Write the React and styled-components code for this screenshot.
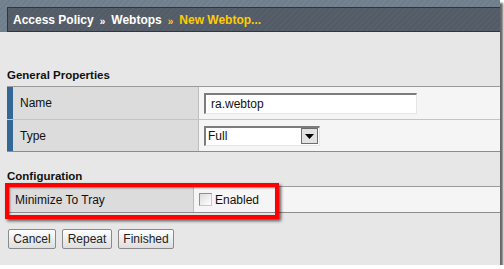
import React from 'react';
import styled, { createGlobalStyle } from 'styled-components';

const GlobalStyle = createGlobalStyle`
  html, body {
    margin: 0;
    padding: 0;
    background: #ffffff;
  }
  body {
    font-family: "Liberation Sans", Arial, sans-serif;
    font-size: 12px;
    color: #111;
  }
`;

const Frame = styled.div`
  position: relative;
  width: 500px;
  height: 265px;
  background: #e7e7e7;
  box-shadow: 3px 3px 2px rgba(0, 0, 0, 0.6);
  overflow: hidden;
`;

const TopStrip = styled.div`
  padding: 7px 0 0 7px;
  background: repeating-linear-gradient(-45deg, #6f7e8d 0 2px, #74838f 2px 4px);
`;

const Header = styled.div`
  height: 23px;
  display: flex;
  align-items: center;
  padding-left: 5px;
  border: 1px solid #30363c;
  border-right: none;
  background: repeating-linear-gradient(-45deg, #535c66 0 2px, #57606a 2px 4px);
  font-weight: bold;
  font-size: 12px;
  color: #ffffff;
`;

const Crumb = styled.span`
  color: ${(p) => (p.$current ? '#ffcc00' : '#ffffff')};
`;

const Sep = styled.span`
  font-size: 10px;
  margin: 3px 6px 0 6px;
  color: ${(p) => (p.$current ? '#ffcc00' : '#ffffff')};
`;

const SectionTitle = styled.div`
  margin-top: ${(p) => p.$top}px;
  padding: 0 0 ${(p) => p.$bottom}px 7px;
  line-height: 14px;
  font-weight: bold;
  font-size: 11.5px;
  color: #111;
`;

const Table = styled.div`
  margin-left: 7px;
  border-top: 1px solid #9a9a9a;
  border-bottom: 1px solid #8c8c8c;
`;

const Row = styled.div`
  display: grid;
  grid-template-columns: ${(p) => p.$label}px 1fr;
  height: ${(p) => p.$h}px;
  & + & {
    border-top: 1px solid #c4c4c4;
  }
`;

const LabelCell = styled.div`
  display: flex;
  align-items: center;
  background: #dcdcdc;
  border-left: ${(p) => (p.$bar ? '6px solid #336797' : 'none')};
  padding-left: ${(p) => (p.$bar ? 7 : 8)}px;
  font-size: 12px;
  color: #111;
`;

const ValueCell = styled.div`
  display: flex;
  align-items: center;
  gap: 3px;
  background: #f5f5f5;
  border-left: 1px solid #bdbdbd;
  padding-left: 5px;
`;

const TextInput = styled.div`
  box-sizing: border-box;
  width: 213px;
  height: 21px;
  display: flex;
  align-items: center;
  padding-left: 5px;
  background: #fff;
  border-top: 2px solid #7c7c7c;
  border-left: 2px solid #7c7c7c;
  border-right: 1px solid #e6e6e6;
  border-bottom: 1px solid #e6e6e6;
  font-size: 12px;
  color: #111;
`;

const Select = styled.div`
  box-sizing: border-box;
  width: 116px;
  height: 20px;
  display: flex;
  align-items: center;
  justify-content: space-between;
  padding: 0 1px 0 2px;
  background: #fff;
  border-top: 2px solid #7c7c7c;
  border-left: 2px solid #7c7c7c;
  border-right: 1px solid #e6e6e6;
  border-bottom: 1px solid #e6e6e6;
  font-size: 12px;
  color: #111;
`;

const DropButton = styled.div`
  box-sizing: border-box;
  width: 17px;
  height: 16px;
  display: flex;
  align-items: center;
  justify-content: center;
  background: #e2e2e2;
  border: 1px solid #6d6d6d;
`;

const Checkbox = styled.div`
  box-sizing: border-box;
  width: 13px;
  height: 13px;
  background: linear-gradient(135deg, #dcdcdc, #ffffff);
  border: 1px solid #8e8e8e;
  border-right-color: #c8c8c8;
  border-bottom-color: #c8c8c8;
`;

const CheckLabel = styled.span`
  font-size: 12px;
  color: #111;
`;

const Buttons = styled.div`
  display: flex;
  gap: 6px;
  margin: 16px 0 0 8px;
`;

const Button = styled.button`
  box-sizing: border-box;
  width: ${(p) => p.$w}px;
  height: 20px;
  padding: 0;
  border: 1px solid #8a8a8a;
  border-radius: 2px;
  background: linear-gradient(#fdfdfd, #dedede);
  font-family: "Liberation Sans", Arial, sans-serif;
  font-size: 12px;
  color: #222;
`;

const Highlight = styled.div`
  position: absolute;
  left: 5px;
  top: 183px;
  width: 274px;
  height: 36px;
  box-sizing: border-box;
  border: 4px solid #ff0000;
  box-shadow: 2px 2px 3px rgba(0, 0, 0, 0.65), inset 1px 1px 2px rgba(0, 0, 0, 0.5);
  pointer-events: none;
`;

const Arrow = () => (
  <svg width="9" height="5" viewBox="0 0 9 5">
    <path d="M0 0h9L4.5 5z" fill="#000" />
  </svg>
);

export default function App() {
  return (
    <>
      <GlobalStyle />
      <Frame>
        <TopStrip>
          <Header>
            <Crumb>Access Policy</Crumb>
            <Sep>»</Sep>
            <Crumb>Webtops</Crumb>
            <Sep $current>»</Sep>
            <Crumb $current>New Webtop...</Crumb>
          </Header>
        </TopStrip>

        <SectionTitle $top={36} $bottom={4}>General Properties</SectionTitle>
        <Table>
          <Row $label={191} $h={32}>
            <LabelCell $bar>Name</LabelCell>
            <ValueCell>
              <TextInput>ra.webtop</TextInput>
            </ValueCell>
          </Row>
          <Row $label={191} $h={31}>
            <LabelCell $bar>Type</LabelCell>
            <ValueCell>
              <Select>
                <span>Full</span>
                <DropButton>
                  <Arrow />
                </DropButton>
              </Select>
            </ValueCell>
          </Row>
        </Table>

        <SectionTitle $top={17} $bottom={3}>Configuration</SectionTitle>
        <Table>
          <Row $label={186} $h={25}>
            <LabelCell>Minimize To Tray</LabelCell>
            <ValueCell>
              <Checkbox />
              <CheckLabel>Enabled</CheckLabel>
            </ValueCell>
          </Row>
        </Table>

        <Buttons>
          <Button $w={48}>Cancel</Button>
          <Button $w={50}>Repeat</Button>
          <Button $w={56}>Finished</Button>
        </Buttons>

        <Highlight />
      </Frame>
    </>
  );
}
